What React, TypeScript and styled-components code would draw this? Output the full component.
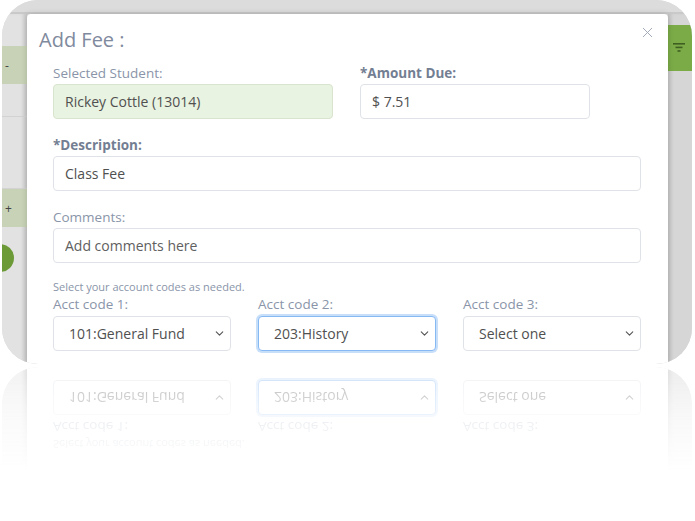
import React from 'react';
import styled, { createGlobalStyle } from 'styled-components';
import { ChevronDown, X } from 'lucide-react';

const GlobalStyle = createGlobalStyle`
    html, body {
        margin: 0;
        padding: 0;
        background: #ffffff;
    }
    body {
        font-family: 'Open Sans', 'Noto Sans', sans-serif;
    }
`;

const accountOptions = [
    { id: 1, value: '101:General Fund', focused: false },
    { id: 2, value: '203:History', focused: true },
    { id: 3, value: 'Select one', focused: false },
];

function FilterIcon() {
    return (
        <svg width='12' height='10' viewBox='0 0 12 10'>
            <rect x='0' y='0' width='12' height='1.6' fill='#3f5f22' />
            <rect x='2.5' y='3.6' width='7' height='1.6' fill='#3f5f22' />
            <rect x='4.5' y='7.2' width='3' height='1.6' fill='#3f5f22' />
        </svg>
    );
}

function AccountCodes() {
    return (
        <CodesBlock>
            <Hint>Select your account codes as needed.</Hint>
            <CodesRow>
                {accountOptions.map((opt) => (
                    <CodeField key={opt.id}>
                        <Label>Acct code {opt.id}:</Label>
                        <SelectWrap>
                            <Select $focused={opt.focused} defaultValue={opt.value}>
                                <option>{opt.value}</option>
                            </Select>
                            <Chevron>
                                <ChevronDown size={13} strokeWidth={2} />
                            </Chevron>
                        </SelectWrap>
                    </CodeField>
                ))}
            </CodesRow>
        </CodesBlock>
    );
}

function App() {
    return (
        <>
            <GlobalStyle />
            <Stage>
                <Screen>
                    <TopBar />
                    <LeftStrip>
                        <StripGap $height={32} />
                        <StripRow>-</StripRow>
                        <StripGap $height={32} $line />
                        <StripGap $height={71} $line />
                        <StripRow>+</StripRow>
                        <Dot />
                    </LeftStrip>
                    <Modal>
                        <ModalHeader>
                            <Title>Add Fee :</Title>
                            <CloseButton>
                                <X size={17} strokeWidth={1.4} />
                            </CloseButton>
                        </ModalHeader>
                        <Body>
                            <TopRow>
                                <Field>
                                    <Label>Selected Student:</Label>
                                    <Input $tone='green' defaultValue='Rickey Cottle (13014)' readOnly />
                                </Field>
                                <Field>
                                    <Label $bold>*Amount Due:</Label>
                                    <Input defaultValue='$ 7.51' />
                                </Field>
                            </TopRow>
                            <Field>
                                <Label $bold>*Description:</Label>
                                <Input defaultValue='Class Fee' />
                            </Field>
                            <Field>
                                <Label>Comments:</Label>
                                <Input placeholder='Add comments here' />
                            </Field>
                            <AccountCodes />
                        </Body>
                    </Modal>
                    <RightStrip>
                        <FilterButton>
                            <FilterIcon />
                        </FilterButton>
                    </RightStrip>
                </Screen>
                {/* glossy mirror of the lower edge of the screen */}
                <Reflection aria-hidden='true'>
                    <LeftStrip />
                    <MirrorModal>
                        <AccountCodes />
                    </MirrorModal>
                    <RightStrip />
                </Reflection>
            </Stage>
        </>
    );
}

export default App;

const Stage = styled.div`
    display: flex;
    flex-direction: column;
    gap: 3px;
    padding-left: 2px;
    width: 690px;
`;

const Screen = styled.div`
    width: 690px;
    height: 364px;
    display: grid;
    grid-template-columns: 25px 641px 24px;
    grid-template-rows: 14px 1fr;
    border-radius: 36px;
    overflow: hidden;
    background: #d8d8d8;
`;

const Reflection = styled.div`
    width: 690px;
    height: 104px;
    display: grid;
    grid-template-columns: 25px 641px 24px;
    border-radius: 0 0 36px 36px;
    overflow: hidden;
    background: #d8d8d8;
    transform: scaleY(-1);
    opacity: 0.5;
    filter: blur(0.7px);
    -webkit-mask-image: linear-gradient(to top, rgba(0, 0, 0, 0.85), rgba(0, 0, 0, 0.35) 45%, transparent);
    mask-image: linear-gradient(to top, rgba(0, 0, 0, 0.85), rgba(0, 0, 0, 0.35) 45%, transparent);
    pointer-events: none;
`;

const TopBar = styled.div`
    grid-column: 1 / 4;
    background: #dcdcdc;
    border-bottom: 2px solid #c9c9c9;
`;

const LeftStrip = styled.div`
    display: flex;
    flex-direction: column;
    background: #e2e2e2;
    box-shadow: inset -5px 0 4px -2px rgba(0, 0, 0, 0.12);
`;

const StripGap = styled.div<{ $height: number; $line?: boolean }>`
    height: ${({ $height }) => $height}px;
    border-bottom: ${({ $line }) => ($line ? '1px solid #d2d2d2' : 'none')};
`;

const StripRow = styled.div`
    height: 38px;
    display: flex;
    align-items: center;
    padding-left: 3px;
    background: #c7d2b6;
    color: #444;
    font-size: 12px;
`;

const Dot = styled.div`
    width: 28px;
    height: 28px;
    margin: 17px 0 0 -16px;
    border-radius: 50%;
    background: #6c9a37;
`;

const Modal = styled.div`
    display: flex;
    flex-direction: column;
    background: #ffffff;
    border-radius: 4px 4px 0 0;
    padding: 12px 27px 0 12px;
    box-shadow: 0 0 6px rgba(0, 0, 0, 0.16);
    position: relative;
    z-index: 1;
`;

const MirrorModal = styled.div`
    display: flex;
    flex-direction: column;
    justify-content: flex-end;
    background: #ffffff;
    padding: 0 27px 13px 26px;
    box-shadow: 0 0 6px rgba(0, 0, 0, 0.16);
    position: relative;
    z-index: 1;
`;

const ModalHeader = styled.div`
    display: flex;
    justify-content: space-between;
    align-items: flex-start;
`;

const Title = styled.h4`
    margin: 0;
    font-size: 20px;
    line-height: 27px;
    font-weight: 400;
    color: #7f8a9e;
`;

const CloseButton = styled.span`
    display: flex;
    margin: -2px -15px 0 0;
    color: #a3aab7;
`;

const Body = styled.div`
    display: flex;
    flex-direction: column;
    gap: 17px;
    padding: 11px 0 0 14px;
`;

const TopRow = styled.div`
    display: grid;
    grid-template-columns: 280px 230px;
    gap: 27px;
`;

const Field = styled.div`
    display: flex;
    flex-direction: column;
    gap: 2px;
`;

const Label = styled.label<{ $bold?: boolean }>`
    font-size: 13.5px;
    line-height: 18px;
    font-weight: ${({ $bold }) => ($bold ? 700 : 400)};
    color: ${({ $bold }) => ($bold ? '#737e92' : '#8a95a9')};
`;

const Input = styled.input<{ $tone?: 'green' }>`
    box-sizing: border-box;
    height: 35px;
    width: 100%;
    padding: 0 11px;
    border: 1px solid ${({ $tone }) => ($tone === 'green' ? '#d8e4cd' : '#dfe2e7')};
    border-radius: 4px;
    background: ${({ $tone }) => ($tone === 'green' ? '#e9f3e1' : '#ffffff')};
    font-family: 'Open Sans', 'Noto Sans', sans-serif;
    font-size: 14px;
    color: #505050;
    outline: none;

    &::placeholder {
        color: #606060;
    }
`;

const CodesBlock = styled.div`
    display: flex;
    flex-direction: column;
    gap: 1px;
`;

const Hint = styled.div`
    font-size: 11px;
    line-height: 14px;
    color: #8a95a9;
`;

const CodesRow = styled.div`
    display: grid;
    grid-template-columns: repeat(3, 1fr);
    gap: 27px;
`;

const CodeField = styled(Field)`
    gap: 3px;
`;

const SelectWrap = styled.div`
    position: relative;
    display: flex;
`;

const Select = styled.select<{ $focused?: boolean }>`
    appearance: none;
    -webkit-appearance: none;
    box-sizing: border-box;
    height: 35px;
    width: 100%;
    padding: 0 24px 0 15px;
    border: 1px solid ${({ $focused }) => ($focused ? '#86b8f3' : '#dfe2e7')};
    border-radius: 4px;
    background: #ffffff;
    box-shadow: ${({ $focused }) => ($focused ? '0 0 0 2px rgba(134, 184, 243, 0.45)' : 'none')};
    font-family: 'Open Sans', 'Noto Sans', sans-serif;
    font-size: 14px;
    color: #505050;
    outline: none;
`;

const Chevron = styled.span`
    position: absolute;
    right: 5px;
    top: 11px;
    display: flex;
    color: #555;
    pointer-events: none;
`;

const RightStrip = styled.div`
    display: flex;
    flex-direction: column;
    padding-top: 11px;
    background: #d6d6d6;
    box-shadow: inset 4px 0 4px -2px rgba(0, 0, 0, 0.1);
`;

const FilterButton = styled.div`
    height: 46px;
    display: flex;
    align-items: center;
    justify-content: center;
    padding-right: 2px;
    background: #7bab47;
`;
